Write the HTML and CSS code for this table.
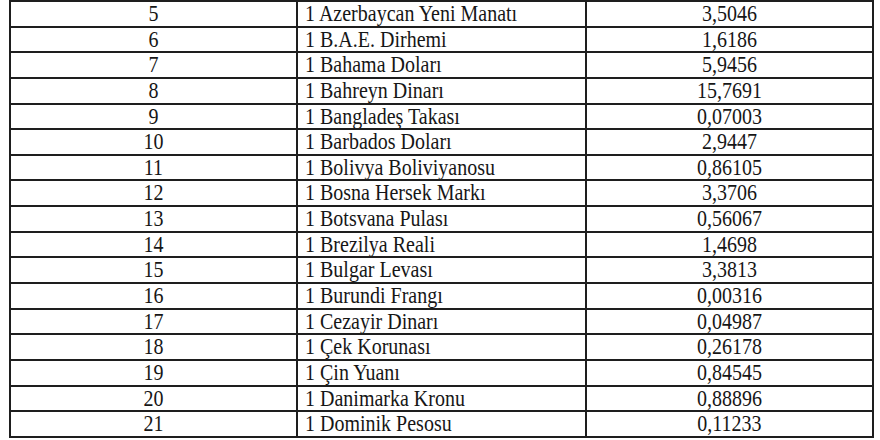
FILE: index.html
```html
<!DOCTYPE html>
<html lang="tr">
<head>
<meta charset="utf-8">
<title>Döviz Kurları</title>
<link rel="stylesheet" href="styles.css">
</head>
<body>
<div class="rates">
  <div class="cell num"><span class="t">5</span></div><div class="cell name"><span class="t">1 Azerbaycan Yeni Manatı</span></div><div class="cell val"><span class="t">3,5046</span></div>
  <div class="cell num"><span class="t">6</span></div><div class="cell name"><span class="t">1 B.A.E. Dirhemi</span></div><div class="cell val"><span class="t">1,6186</span></div>
  <div class="cell num"><span class="t">7</span></div><div class="cell name"><span class="t">1 Bahama Doları</span></div><div class="cell val"><span class="t">5,9456</span></div>
  <div class="cell num"><span class="t">8</span></div><div class="cell name"><span class="t">1 Bahreyn Dinarı</span></div><div class="cell val"><span class="t">15,7691</span></div>
  <div class="cell num"><span class="t">9</span></div><div class="cell name"><span class="t">1 Bangladeş Takası</span></div><div class="cell val"><span class="t">0,07003</span></div>
  <div class="cell num"><span class="t">10</span></div><div class="cell name"><span class="t">1 Barbados Doları</span></div><div class="cell val"><span class="t">2,9447</span></div>
  <div class="cell num"><span class="t">11</span></div><div class="cell name"><span class="t">1 Bolivya Boliviyanosu</span></div><div class="cell val"><span class="t">0,86105</span></div>
  <div class="cell num"><span class="t">12</span></div><div class="cell name"><span class="t">1 Bosna Hersek Markı</span></div><div class="cell val"><span class="t">3,3706</span></div>
  <div class="cell num"><span class="t">13</span></div><div class="cell name"><span class="t">1 Botsvana Pulası</span></div><div class="cell val"><span class="t">0,56067</span></div>
  <div class="cell num"><span class="t">14</span></div><div class="cell name"><span class="t">1 Brezilya Reali</span></div><div class="cell val"><span class="t">1,4698</span></div>
  <div class="cell num"><span class="t">15</span></div><div class="cell name"><span class="t">1 Bulgar Levası</span></div><div class="cell val"><span class="t">3,3813</span></div>
  <div class="cell num"><span class="t">16</span></div><div class="cell name"><span class="t">1 Burundi Frangı</span></div><div class="cell val"><span class="t">0,00316</span></div>
  <div class="cell num"><span class="t">17</span></div><div class="cell name"><span class="t">1 Cezayir Dinarı</span></div><div class="cell val"><span class="t">0,04987</span></div>
  <div class="cell num"><span class="t">18</span></div><div class="cell name"><span class="t">1 Çek Korunası</span></div><div class="cell val"><span class="t">0,26178</span></div>
  <div class="cell num"><span class="t">19</span></div><div class="cell name"><span class="t">1 Çin Yuanı</span></div><div class="cell val"><span class="t">0,84545</span></div>
  <div class="cell num"><span class="t">20</span></div><div class="cell name"><span class="t">1 Danimarka Kronu</span></div><div class="cell val"><span class="t">0,88896</span></div>
  <div class="cell num"><span class="t">21</span></div><div class="cell name"><span class="t">1 Dominik Pesosu</span></div><div class="cell val"><span class="t">0,11233</span></div>
</div>
</body>
</html>
```
FILE: styles.css
```css
html, body {
  margin: 0;
  padding: 0;
  background: #ffffff;
}

body {
  width: 880px;
  height: 440px;
  overflow: hidden;
  font-family: "Liberation Serif", "Times New Roman", serif;
  color: #161616;
}

.rates {
  display: grid;
  grid-template-columns: 285px 287px 285px;
  grid-auto-rows: 23.65px;
  gap: 2px;
  padding: 2px;
  margin-left: 9px;
  width: fit-content;
  background: #1e1e1e;
}

.cell {
  background: #ffffff;
  font-size: 20px;
  line-height: 23.65px;
  white-space: nowrap;
  overflow: hidden;
}

.t {
  display: inline-block;
  transform: translateY(0.6px) scaleY(1.14);
}

.num,
.val {
  text-align: center;
}

.name {
  padding-left: 7px;
}
```
